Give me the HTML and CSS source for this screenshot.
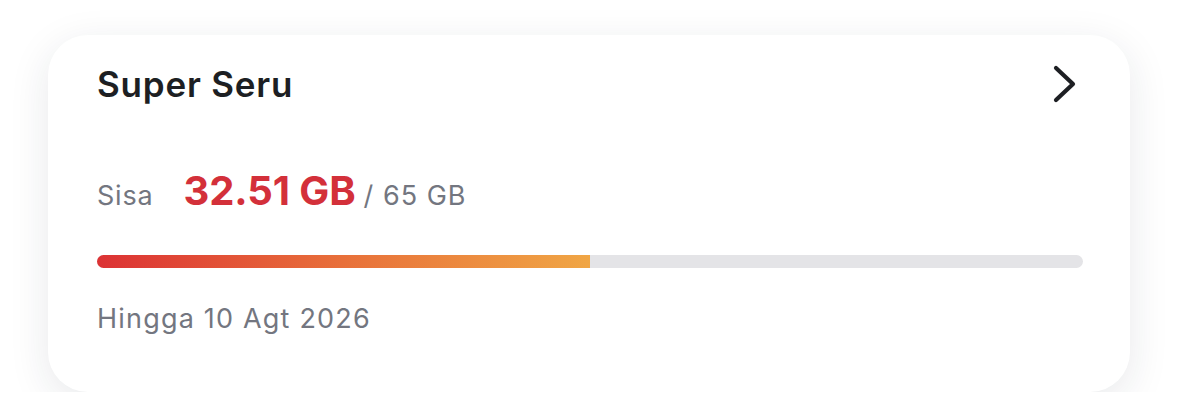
FILE: index.html
```html
<!DOCTYPE html>
<html lang="en">
<head>
    <meta charset="UTF-8">
    <meta name="viewport" content="width=device-width, initial-scale=1.0">
    <title>Kuota</title>
    <link rel="stylesheet" href="styles.css">
</head>
<body>
    <div class="card">
        <div class="card-head">
            <h2 class="title">Super Seru</h2>
            <svg class="chevron" width="28" height="40" viewBox="0 0 28 40">
                <path d="M5 4 L22 20 L5 36" fill="none" stroke="#1d1f23" stroke-width="4.2" stroke-linecap="round" stroke-linejoin="round"/>
            </svg>
        </div>
        <div class="quota">
            <span class="label">Sisa</span>
            <span class="left">32.51 GB</span>
            <span class="total">/ 65 GB</span>
        </div>
        <div class="bar">
            <div class="fill" style="width: 50.02%"></div>
        </div>
        <p class="until">Hingga 10 Agt 2026</p>
    </div>
</body>
</html>
```

FILE: styles.css
```css
body {
    margin: 0;
    padding: 35px 0 0 48px;
    background-color: #fff;
    font-family: 'Inter', 'Open Sans', sans-serif;
}

.card {
    box-sizing: border-box;
    width: 1082px;
    height: 357px;
    padding: 26px 47px 0 49px;
    background-color: #fff;
    border-radius: 40px;
    box-shadow: 0 10px 40px rgba(30, 35, 60, 0.1);
}

.card-head {
    display: flex;
    justify-content: space-between;
    align-items: center;
}

.title {
    margin: 0;
    font-size: 35px;
    font-weight: 600;
    letter-spacing: 0.8px;
    color: #1d1f23;
    line-height: 46px;
}

.chevron {
    margin-right: 4px;
}

.quota {
    display: flex;
    align-items: baseline;
    margin-top: 62px;
    color: #737680;
    line-height: 44px;
}

.label {
    font-size: 27px;
    letter-spacing: 0.8px;
    margin-right: 30px;
}

.left {
    font-size: 40px;
    font-weight: 700;
    color: #d3303a;
    letter-spacing: -0.1px;
    margin-right: 8px;
}

.total {
    font-size: 27px;
    letter-spacing: 1px;
}

.bar {
    margin-top: 37px;
    height: 13px;
    border-radius: 7px;
    background-color: #e4e4e7;
    overflow: hidden;
}

.fill {
    height: 100%;
    background: linear-gradient(90deg, #dc3234, #e8703a 50%, #f0a645);
}

.until {
    margin: 34px 0 0;
    font-size: 27px;
    letter-spacing: 1.2px;
    color: #737680;
}
```
